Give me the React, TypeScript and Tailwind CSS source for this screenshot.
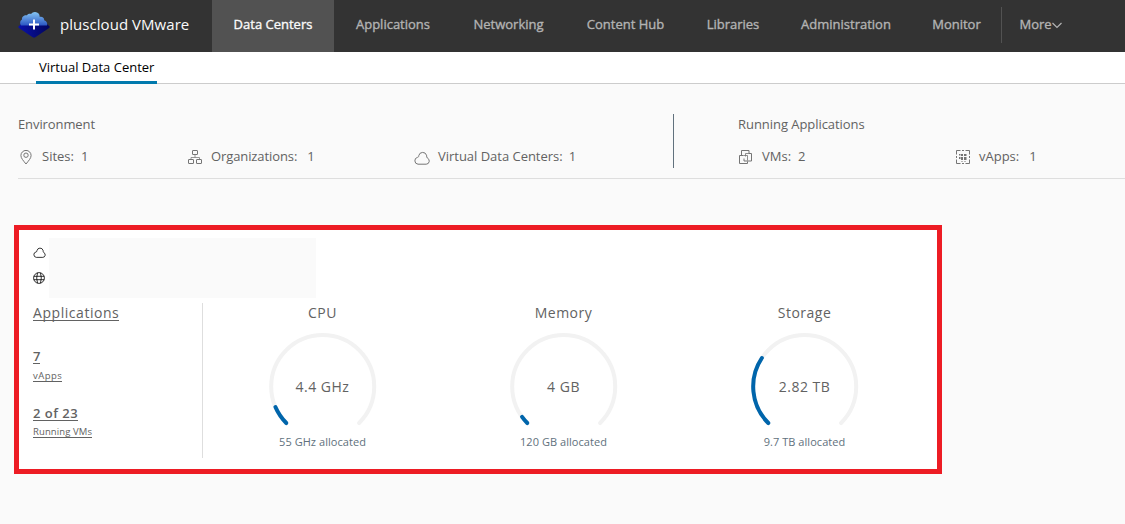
import type { ReactNode } from "react";

const navItems = [
  { label: "Data Centers", width: "w-[122px]", active: true },
  { label: "Applications", width: "w-[118px]" },
  { label: "Networking", width: "w-[113px]" },
  { label: "Content Hub", width: "w-[121px]" },
  { label: "Libraries", width: "w-[94px]" },
  { label: "Administration", width: "w-[132px]" },
  { label: "Monitor", width: "w-[89px]" },
];

function Logo() {
  return (
    <svg width="32" height="28" viewBox="0 0 32 28" className="shrink-0">
      <defs>
        <linearGradient id="cloud" x1="0" y1="0" x2="0" y2="1">
          <stop offset="0" stopColor="#86c6f2" />
          <stop offset="1" stopColor="#2a55c4" />
        </linearGradient>
        <linearGradient id="base" x1="0" y1="0" x2="1" y2="0">
          <stop offset="0" stopColor="#0a12a8" />
          <stop offset="1" stopColor="#02055c" />
        </linearGradient>
      </defs>
      <path d="M.5 15.5 3 13H29l2.5 2.5v1.3L17.3 26.3a2.4 2.4 0 0 1-2.6 0L.5 16.8Z" fill="url(#base)" />
      <path
        d="M3 14.6C1.4 12 2.400 9.300 4 8.500 3.600 5.800 6.300 3.800 9 4.300 10 2.800 11.800 2.600 13 3 14.500.700 17.500.300 19.500 1.700c1.700 1 2.300 2.500 2.100 4.100 2.600-.6 4.800 1 4.600 3.400 2.300.7 3.600 3 2.800 5.400Z"
        fill="url(#cloud)"
      />
      <path d="M16 8.600v10M11 13.600h10" stroke="#fff" strokeWidth="2" />
    </svg>
  );
}

function CloudIcon({ className }: { className: string }) {
  return (
    <svg viewBox="0 0 16 14" className={className} fill="none" stroke="currentColor">
      <path d="M4 13.2H12.2A3.200 3.200 0 0 0 13.400 7.100C12.700 6.600 12.700 5.400 12.500 4.200A4 4 0 0 0 4.800 4.500C4.900 5.600 4.500 6 3.600 6.300A3.500 3.500 0 0 0 4 13.200Z" />
    </svg>
  );
}

function PinIcon() {
  return (
    <svg width="12" height="15" viewBox="0 0 12 15" fill="none" stroke="currentColor">
      <path d="M6 14C3.500 10.800.900 8.300.900 5.500a5.100 5.100 0 0 1 10.200 0C11.100 8.300 8.500 10.800 6 14Z" />
      <circle cx="6" cy="5.200" r="2.200" />
    </svg>
  );
}

function OrgIcon() {
  return (
    <svg width="15" height="15" viewBox="0 0 15 15" fill="none" stroke="currentColor">
      <rect x="4.500" y=".5" width="5" height="4" rx=".3" />
      <path d="M7 4.500v3M3 10V7.500h8.500V10" opacity=".75" />
      <rect x=".5" y="9.500" width="5" height="4" rx=".3" />
      <rect x="8.500" y="9.500" width="5" height="4" rx=".3" />
    </svg>
  );
}

function VmIcon() {
  return (
    <svg width="14" height="15" viewBox="0 0 14 15" fill="none" stroke="currentColor">
      <path d="M2.500 5V.5h7.500v3" />
      <path d="M4.500 5.500h-4v8h8v-2" />
      <path d="M10 3.500h2.500v7.500h-7.500V8.500" />
      <path d="M6.500 6.500v-3h3.500M4.500 5.500h4v5" opacity=".8" />
    </svg>
  );
}

function VappIcon() {
  return (
    <svg width="14" height="15" viewBox="0 0 14 15" fill="none" stroke="currentColor">
      <path d="M.5 4.500v-4H4.500M6 .5h2M9.500.500h4v4M.5 6v2M13.500 6v2M.5 9.500v4h4M6 13.500h2M9.500 13.500h4v-4" />
      <path
        d="M3 4h1.500v1.500H3zM5 4h2v2H5zM8 4h2.500v2H8zM3 7h1.500v2H3zM5 7h2v3H5zM8 7h2.500v3H8zM5.500 11h1v1h-1zM8.500 11h1v1h-1z"
        fill="currentColor"
        stroke="none"
      />
    </svg>
  );
}

function GlobeIcon() {
  return (
    <svg width="12" height="12" viewBox="0 0 12 12" fill="none" stroke="currentColor" strokeWidth=".8">
      <circle cx="6" cy="6" r="5.400" />
      <path d="M4.500.900Q2.900 6 4.500 11.100M7.500.900Q9.100 6 7.500 11.100M.8 4.300h10.400M.8 7.700h10.400" />
    </svg>
  );
}

function Stat({ icon, label, value, width, pad, gap }: { icon: ReactNode; label: string; value: string; width: string; pad: string; gap: string }) {
  return (
    <div className={`flex h-[22px] shrink-0 items-center whitespace-nowrap ${width} ${gap}`}>
      <span className="flex items-center pt-px text-[#757575]">{icon}</span>
      <span className={pad}>{label}</span>
      <span>{value}</span>
    </div>
  );
}

const RADIUS = 51.5;
const ARC = 2 * Math.PI * RADIUS * 0.75;

function Gauge({ title, value, allocated, used }: { title: string; value: string; allocated: string; used: number }) {
  return (
    <div className="flex w-[241px] flex-col items-center">
      <div className="h-5 text-[14px] leading-5 tracking-[0.5px]">{title}</div>
      <div className="mt-[10px] grid h-[108px] w-[108px] place-items-center">
        <svg width="108" height="108" viewBox="0.3 0.4 108 108" fill="none" strokeWidth="4" strokeLinecap="round" className="col-start-1 row-start-1">
          <g transform="rotate(135 54 54)">
            <path d={`M${54 + RADIUS} 54A${RADIUS} ${RADIUS} 0 1 1 54 ${54 - RADIUS}`} stroke="#f2f2f2" />
            <path
              d={`M${54 + RADIUS} 54A${RADIUS} ${RADIUS} 0 1 1 54 ${54 - RADIUS}`}
              stroke="#0065ab"
              strokeDasharray={`${ARC * used} 400`}
            />
          </g>
        </svg>
        <span className="col-start-1 row-start-1 text-[14px] leading-5 tracking-[0.5px]">{value}</span>
      </div>
      <div className="-mt-[7px] text-[11px] leading-4 tracking-[0.05px] text-[#61717d]">{allocated}</div>
    </div>
  );
}

export default function App() {
  return (
    <div className="flex h-[524px] w-[1125px] flex-col overflow-hidden bg-[#fafafa] font-['Open_Sans',sans-serif] text-[13px] text-[#626262]">
      <header className="flex h-[52px] shrink-0 bg-[#333] text-[#b3b3b3]">
        <div className="flex w-[212px] items-center gap-[10px] pb-[3px] pl-[18px] text-[15px] whitespace-nowrap text-[#fafafa]">
          <Logo />
          <span className="-mt-px tracking-[0.05px]">pluscloud VMware</span>
        </div>
        {navItems.map((item) => (
          <a
            key={item.label}
            className={`flex items-center justify-center pb-[3px] [-webkit-text-stroke:0.35px] ${item.width} ${item.active ? "bg-[#525252] text-[#fafafa]" : ""}`}
          >
            {item.label}
          </a>
        ))}
        <div className="mt-[7px] flex h-9 items-center border-l border-[#525252] pl-[17.500px]">
          <span className="[-webkit-text-stroke:0.35px]">More</span>
          <svg width="10" height="7" viewBox="0 0 10 7" fill="none" stroke="currentColor" strokeWidth="1.200">
            <path d="M.5 1 5 5.500 9.500 1" />
          </svg>
        </div>
      </header>

      <nav className="flex h-8 shrink-0 border-b border-[#ccc] bg-white pl-9">
        <a className="-mb-px w-[121px] border-b-[3px] border-[#0079ad] pl-[3px] leading-[30px] whitespace-nowrap text-black">
          Virtual Data Center
        </a>
      </nav>

      <section className="ml-[18px] flex h-[95px] shrink-0 border-b border-[#dedede] pt-[30px]">
        <div className="h-[54px] w-[656px] border-r border-[#61717d]">
          <div className="h-5 leading-5 tracking-[-0.1px]">Environment</div>
          <div className="mt-3 flex">
            <Stat icon={<PinIcon />} label="Sites:" value="1" width="w-[168px] pl-[2px]" pad="pr-[7px]" gap="gap-[10px] [&>:last-child]:-ml-[10px]" />
            <Stat icon={<OrgIcon />} label="Organizations:" value="1" width="w-[228px] pl-[2px]" pad="pr-[10px] tracking-[-0.1px]" gap="gap-[8px] [&>:last-child]:-ml-[8px]" />
            <Stat icon={<CloudIcon className="h-[14px] w-4" />} label="Virtual Data Centers:" value="1" width="w-[200px]" pad="pr-[6px] tracking-[-0.02px]" gap="gap-[8px] [&>:last-child]:-ml-[8px]" />
          </div>
        </div>
        <div className="pl-[64px]">
          <div className="h-5 leading-5 tracking-[-0.05px]">Running Applications</div>
          <div className="mt-3 flex">
            <Stat icon={<VmIcon />} label="VMs:" value="2" width="w-[217px] pl-[1px]" pad="pr-[7px]" gap="gap-[9px] [&>:last-child]:-ml-[9px]" />
            <Stat icon={<VappIcon />} label="vApps:" value="1" width="w-[120px] pl-[1px]" pad="pr-[10px]" gap="gap-[9px] [&>:last-child]:-ml-[9px]" />
          </div>
        </div>
      </section>

      <main className="mt-[46px] ml-[14px] h-[249px] w-[928px] shrink-0 border-[5px] border-[#ed1c24] bg-white">
        <div className="flex h-[73px] pt-2">
          <div className="flex w-[30px] flex-col pt-[9px] pl-[14px] text-black">
            <CloudIcon className="h-[11px] w-[13px]" />
            <span className="mt-[14px]"><GlobeIcon /></span>
          </div>
          <div className="h-[60px] w-[267px] bg-[#fafafa]" />
        </div>
        <div className="flex">
          <div className="flex h-[155px] w-[184px] flex-col items-start border-r border-[#dedede] pl-[14px] whitespace-nowrap">
            <a className="h-[18px] border-b border-[#626262] text-[14px] leading-[20px] tracking-[0.550px]">Applications</a>
            <a className="mt-[28px] h-[15px] border-b border-[#626262] font-semibold leading-[15px]">7</a>
            <a className="mt-[6px] h-[12px] border-b border-[#626262] text-[9.500px] leading-[12px] tracking-[0.450px]">vApps</a>
            <a className="mt-[24px] h-[15px] border-b border-[#626262] font-semibold leading-[15px] tracking-[0.500px]">2 of 23</a>
            <a className="mt-[5px] h-[12px] border-b border-[#626262] text-[9.500px] leading-[11px] tracking-[0.100px]">Running VMs</a>
          </div>
          <div className="-ml-px flex">
            <Gauge title="CPU" value="4.4 GHz" allocated="55 GHz allocated" used={0.08} />
            <Gauge title="Memory" value="4 GB" allocated="120 GB allocated" used={0.0333} />
            <Gauge title="Storage" value="2.82 TB" allocated="9.7 TB allocated" used={0.291} />
          </div>
        </div>
      </main>
    </div>
  );
}
